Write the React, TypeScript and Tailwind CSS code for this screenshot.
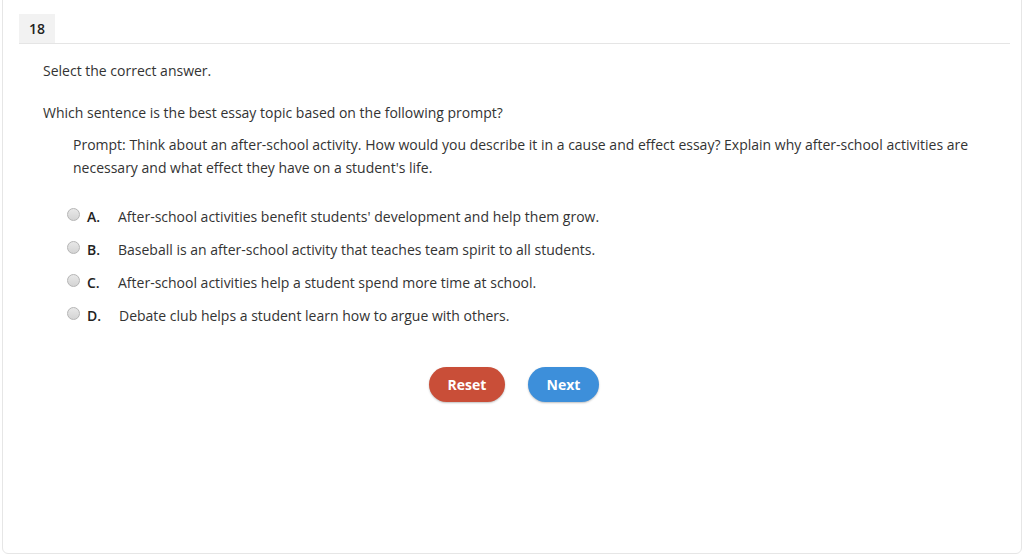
import React from "react";

const options = [
  { l: "A.", t: "After-school activities benefit students' development and help them grow." },
  { l: "B.", t: "Baseball is an after-school activity that teaches team spirit to all students." },
  { l: "C.", t: "After-school activities help a student spend more time at school." },
  { l: "D.", t: "Debate club helps a student learn how to argue with others." },
];

export default function App() {
  return (
    <div
      className="w-[1023px] h-[556px] bg-white overflow-hidden text-[#333333]"
      style={{ fontFamily: '"Open Sans", "Liberation Sans", sans-serif' }}
    >
      <div className="ml-[2px] mr-[1px] mt-[-10px] h-[564px] border border-[#e6e6e6] rounded-[6px] bg-white">
        <div className="pt-[23px] pl-[16px] pr-[11px]">
          <div className="border-b border-[#e5e5e5] flex">
            <div className="w-[36px] h-[29px] bg-[#f2f2f2] flex items-center justify-center text-[14px] font-semibold text-[#222]">
              18
            </div>
          </div>
        </div>
        <div className="pl-[40px] pr-[40px] text-[14px] leading-[23px]">
          <p className="mt-[15px]">Select the correct answer.</p>
          <p className="mt-[19px]">Which sentence is the best essay topic based on the following prompt?</p>
          <p className="mt-[9px] pl-[30px]">
            Prompt: Think about an after-school activity. How would you describe it in a cause and effect essay? Explain why after-school activities are necessary and what effect they have on a student's life.
          </p>
          <div className="mt-[26px] pl-[24px] flex flex-col gap-[10px]">
            {options.map((o) => (
              <div key={o.l} className="flex items-start h-[23px]">
                <span className="mt-[3px] w-[13px] h-[13px] rounded-full border border-[#b5b5b5] bg-gradient-to-b from-[#e8e8e8] to-[#d4d4d4] shrink-0" />
                <span className="ml-[7px] w-[31px] font-semibold text-[#222]">{o.l}</span>
                <span className={o.l === "D." ? "ml-[1px]" : ""}>{o.t}</span>
              </div>
            ))}
          </div>
          <div className="mt-[40px] flex justify-center gap-[23px] ml-[4px]">
            <button className="w-[76px] h-[35px] rounded-full bg-[#c94e38] text-white font-bold text-[14px] shadow-[0_1px_2px_rgba(0,0,0,0.25)]">
              Reset
            </button>
            <button className="w-[71px] h-[35px] rounded-full bg-[#3d8fda] text-white font-bold text-[14px] shadow-[0_1px_2px_rgba(0,0,0,0.25)]">
              Next
            </button>
          </div>
        </div>
      </div>
    </div>
  );
}
